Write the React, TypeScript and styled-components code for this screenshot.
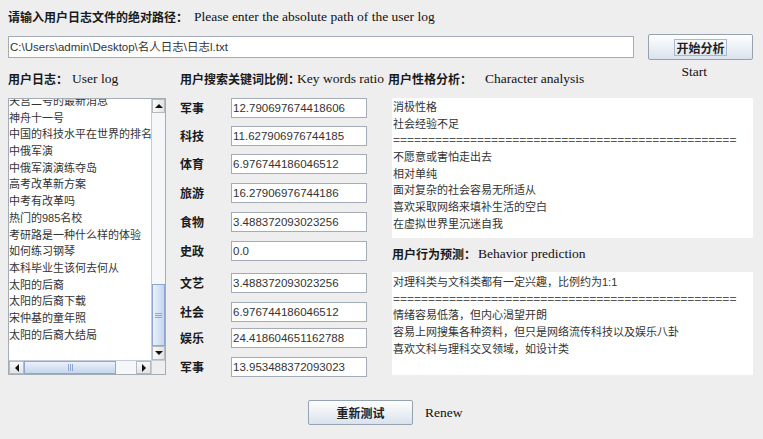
import React from "react";
import styled, { createGlobalStyle } from "styled-components";

const CJK = `"Noto Sans CJK SC", sans-serif`;
const SANS = `"Liberation Sans", "Noto Sans CJK SC", sans-serif`;
const SERIF = `"Liberation Serif", "Noto Sans CJK SC", serif`;

const GlobalStyle = createGlobalStyle`
  html, body { margin: 0; padding: 0; background: #eeeeee; }
  #root { width: 763px; height: 439px; overflow: hidden; }
`;

const Page = styled.div`
  width: 763px;
  height: 439px;
  box-sizing: border-box;
  padding-left: 8px;
  display: flex;
  flex-direction: column;
  background: #eeeeee;
  color: #111;
`;

const TitleBar = styled.div`
  height: 34px;
  display: flex;
  align-items: center;
`;

const Heading = styled.div<{ $ml?: number; $mt?: number }>`
  display: flex;
  align-items: center;
  white-space: nowrap;
  height: 16px;
  margin-left: ${(p) => p.$ml ?? 0}px;
  margin-top: ${(p) => p.$mt ?? 0}px;
`;

const Cn = styled.span`
  font-family: ${CJK};
  font-weight: 700;
  font-size: 12px;
  line-height: 16px;
  color: #1a1a1a;
`;

const En = styled.span<{ $gap: number }>`
  font-family: ${SERIF};
  font-size: 13.5px;
  line-height: 16px;
  margin-left: ${(p) => p.$gap}px;
  color: #111;
`;

const TopRow = styled.div`
  display: flex;
  height: 26px;
`;

const PathField = styled.div`
  width: 626px;
  height: 22px;
  margin-top: 2px;
  box-sizing: border-box;
  border: 1px solid #a3acb7;
  background: #fff;
  font-family: ${SANS};
  font-size: 11.5px;
  line-height: 20px;
  color: #333;
  padding-left: 1px;
  white-space: nowrap;
`;

const Button = styled.button<{ $ml?: number; $h: number }>`
  width: 105px;
  height: ${(p) => p.$h}px;
  margin: 0 0 0 ${(p) => p.$ml ?? 0}px;
  padding: 0;
  box-sizing: border-box;
  border: 1px solid #95a2b2;
  border-radius: 2px;
  background: linear-gradient(#fdfefe 0%, #eef2f6 45%, #d9e2ec 100%);
  display: flex;
  align-items: center;
  justify-content: center;
  cursor: default;
`;

const ButtonText = styled.span<{ $focus?: boolean }>`
  font-family: ${CJK};
  font-weight: 700;
  font-size: 12px;
  line-height: 15px;
  color: #222;
  padding: 0 1px;
  border: 1px solid ${(p) => (p.$focus ? "#a9b8ca" : "transparent")};
`;

const Main = styled.div`
  display: flex;
  margin-top: 11px;
`;

const Column = styled.div<{ $w: number; $ml?: number }>`
  width: ${(p) => p.$w}px;
  margin-left: ${(p) => p.$ml ?? 0}px;
  display: flex;
  flex-direction: column;
`;

/* ---------- list with scrollbars ---------- */
const ListBox = styled.div`
  margin-top: 11px;
  height: 277px;
  box-sizing: border-box;
  border: 1px solid #a3acb7;
  display: grid;
  grid-template-columns: 1fr 14px;
  grid-template-rows: 1fr 14px;
  background: #fff;
`;

const Viewport = styled.div`
  overflow: hidden;
  background: #fff;
`;

const Items = styled.ul`
  list-style: none;
  margin: -6px 0 0;
  padding: 0;
`;

const Item = styled.li`
  font-family: ${SANS};
  font-size: 11px;
  line-height: 16.7px;
  height: 16.7px;
  color: #333;
  white-space: nowrap;
`;

const VScroll = styled.div`
  display: flex;
  flex-direction: column;
  background: #f6f7f9;
  border-left: 1px solid #c3ccd8;
`;

const HScroll = styled.div`
  display: flex;
  background: #f6f7f9;
  border-top: 1px solid #c3ccd8;
`;

const Corner = styled.div`
  background: #eeeeee;
  border-top: 1px solid #c3ccd8;
  border-left: 1px solid #c3ccd8;
`;

const Arrow = styled.div<{ $horizontal?: boolean }>`
  flex: none;
  width: ${(p) => (p.$horizontal ? "15px" : "auto")};
  height: ${(p) => (p.$horizontal ? "auto" : "14px")};
  box-sizing: border-box;
  border: 1px solid #b2bac4;
  background: linear-gradient(${(p) => (p.$horizontal ? "#fafafa, #e3e3e3" : "to right, #fafafa, #e3e3e3")});
  display: flex;
  align-items: center;
  justify-content: center;
`;

const Track = styled.div`
  flex: 1;
`;

const Thumb = styled.div<{ $horizontal?: boolean; $len: number }>`
  flex: none;
  ${(p) => (p.$horizontal ? `width: ${p.$len}px;` : `height: ${p.$len}px;`)}
  box-sizing: border-box;
  border: 1px solid #8ea7d2;
  background: linear-gradient(
    ${(p) => (p.$horizontal ? "#eaf1fa, #c6d6ee" : "to right, #eaf1fa, #c6d6ee")}
  );
  display: flex;
  align-items: center;
  justify-content: center;
`;

/* ---------- ratio rows ---------- */
const Row = styled.div<{ $mt: number }>`
  display: flex;
  align-items: center;
  height: 20px;
  margin-top: ${(p) => p.$mt}px;
`;

const RowLabel = styled.span`
  width: 51px;
  font-family: ${CJK};
  font-weight: 700;
  font-size: 12px;
  line-height: 16px;
  color: #1a1a1a;
`;

const NumField = styled.div`
  width: 136px;
  height: 20px;
  box-sizing: border-box;
  border: 1px solid #a3acb7;
  background: #fff;
  font-family: ${SANS};
  font-size: 11.5px;
  line-height: 18px;
  color: #333;
  padding-left: 1px;
  white-space: nowrap;
`;

/* ---------- right side ---------- */
const Caption = styled.span`
  align-self: flex-start;
  margin: -7px 46px 0 auto;
  font-family: ${SERIF};
  font-size: 13.5px;
  line-height: 16px;
  color: #111;
`;

const TextArea = styled.div<{ $mt: number; $h: number; $pt: number }>`
  margin-top: ${(p) => p.$mt}px;
  height: ${(p) => p.$h}px;
  box-sizing: border-box;
  background: #fff;
  padding: ${(p) => p.$pt}px 1px 0;
  overflow: hidden;
`;

const Line = styled.div<{ $rule?: boolean }>`
  font-family: ${SANS};
  font-size: ${(p) => (p.$rule ? "12px" : "11px")};
  line-height: 16.7px;
  height: 16.7px;
  color: ${(p) => (p.$rule ? "#555" : "#333")};
  white-space: nowrap;
  overflow: hidden;
`;

const BottomRow = styled.div`
  display: flex;
  align-items: center;
  margin-top: 23px;
  padding-left: 300px;
  height: 25px;
`;

const BottomCaption = styled.span`
  margin-left: 12px;
  font-family: ${SERIF};
  font-size: 13.5px;
  line-height: 16px;
  color: #111;
`;

/* ---------- drawings ---------- */
const Tri = ({ dir }: { dir: "up" | "down" | "left" | "right" }) => {
  const pts =
    dir === "up"
      ? "0,4 4,0 8,4"
      : dir === "down"
      ? "0,0 8,0 4,4"
      : dir === "left"
      ? "4,0 4,8 0,4"
      : "0,0 4,4 0,8";
  const w = dir === "up" || dir === "down" ? 8 : 4;
  const h = dir === "up" || dir === "down" ? 4 : 8;
  return (
    <svg width={w} height={h} viewBox={`0 0 ${w} ${h}`}>
      <polygon points={pts} fill="#111" />
    </svg>
  );
};

const Grip = ({ horizontal }: { horizontal?: boolean }) =>
  horizontal ? (
    <svg width="5" height="7" viewBox="0 0 5 7">
      <path d="M0.5 0v7M2.5 0v7M4.5 0v7" stroke="#8ea7d2" strokeWidth="1" />
    </svg>
  ) : (
    <svg width="7" height="5" viewBox="0 0 7 5">
      <path d="M0 0.5h7M0 2.5h7M0 4.5h7" stroke="#8ea7d2" strokeWidth="1" />
    </svg>
  );

const logItems = [
  "天宫二号的最新消息",
  "神舟十一号",
  "中国的科技水平在世界的排名",
  "中俄军演",
  "中俄军演演练夺岛",
  "高考改革新方案",
  "中考有改革吗",
  "热门的985名校",
  "考研路是一种什么样的体验",
  "如何练习钢琴",
  "本科毕业生该何去何从",
  "太阳的后裔",
  "太阳的后裔下载",
  "宋仲基的童年照",
  "太阳的后裔大结局",
];

const ratios = [
  { k: "军事", v: "12.790697674418606", mt: 11 },
  { k: "科技", v: "11.627906976744185", mt: 8 },
  { k: "体育", v: "6.976744186046512", mt: 8 },
  { k: "旅游", v: "16.27906976744186", mt: 9 },
  { k: "食物", v: "3.488372093023256", mt: 9 },
  { k: "史政", v: "0.0", mt: 9 },
  { k: "文艺", v: "3.488372093023256", mt: 12 },
  { k: "社会", v: "6.976744186046512", mt: 9 },
  { k: "娱乐", v: "24.418604651162788", mt: 6 },
  { k: "军事", v: "13.953488372093023", mt: 9 },
];

const RULE = "=".repeat(49);

const character = [
  "消极性格",
  "社会经验不足",
  RULE,
  "不愿意或害怕走出去",
  "相对单纯",
  "面对复杂的社会容易无所适从",
  "喜欢采取网络来填补生活的空白",
  "在虚拟世界里沉迷自我",
];

const behavior = [
  "对理科类与文科类都有一定兴趣，比例约为1:1",
  RULE,
  "情绪容易低落，但内心渴望开朗",
  "容易上网搜集各种资料，但只是网络流传科技以及娱乐八卦",
  "喜欢文科与理科交叉领域，如设计类",
];

export default function App() {
  return (
    <>
      <GlobalStyle />
      <Page>
        <TitleBar>
          <Heading>
            <Cn>请输入用户日志文件的绝对路径：</Cn>
            <En $gap={6}>Please enter the absolute path of the user log</En>
          </Heading>
        </TitleBar>

        <TopRow>
          <PathField>C:\Users\admin\Desktop\名人日志\日志l.txt</PathField>
          <Button $ml={14} $h={26}>
            <ButtonText $focus>开始分析</ButtonText>
          </Button>
        </TopRow>

        <Main>
          <Column $w={158}>
            <Heading>
              <Cn>用户日志：</Cn>
              <En $gap={4}>User log</En>
            </Heading>
            <ListBox>
              <Viewport>
                <Items>
                  {logItems.map((t, i) => (
                    <Item key={i}>{t}</Item>
                  ))}
                </Items>
              </Viewport>
              <VScroll>
                <Arrow>
                  <Tri dir="up" />
                </Arrow>
                <Track />
                <Thumb $len={62}>
                  <Grip />
                </Thumb>
                <Arrow>
                  <Tri dir="down" />
                </Arrow>
              </VScroll>
              <HScroll>
                <Arrow $horizontal>
                  <Tri dir="left" />
                </Arrow>
                <Thumb $horizontal $len={92}>
                  <Grip horizontal />
                </Thumb>
                <Track />
                <Arrow $horizontal>
                  <Tri dir="right" />
                </Arrow>
              </HScroll>
              <Corner />
            </ListBox>
          </Column>

          <Column $w={187} $ml={14}>
            <Heading>
              <Cn>用户搜索关键词比例：</Cn>
              <En $gap={-3}>Key words ratio</En>
            </Heading>
            {ratios.map((r, i) => (
              <Row key={i} $mt={r.mt}>
                <RowLabel>{r.k}</RowLabel>
                <NumField>{r.v}</NumField>
              </Row>
            ))}
          </Column>

          <Column $w={361} $ml={25}>
            <Heading $ml={-4}>
              <Cn>用户性格分析：</Cn>
              <En $gap={13}>Character analysis</En>
              <Caption>Start</Caption>
            </Heading>
            <TextArea $mt={11} $h={140} $pt={1}>
              {character.map((t, i) => (
                <Line key={i} $rule={t === RULE}>
                  {t}
                </Line>
              ))}
            </TextArea>
            <Heading $mt={8}>
              <Cn>用户行为预测：</Cn>
              <En $gap={2}>Behavior prediction</En>
            </Heading>
            <TextArea $mt={10} $h={103} $pt={2}>
              {behavior.map((t, i) => (
                <Line key={i} $rule={t === RULE}>
                  {t}
                </Line>
              ))}
            </TextArea>
          </Column>
        </Main>

        <BottomRow>
          <Button $h={25}>
            <ButtonText>重新测试</ButtonText>
          </Button>
          <BottomCaption>Renew</BottomCaption>
        </BottomRow>
      </Page>
    </>
  );
}
